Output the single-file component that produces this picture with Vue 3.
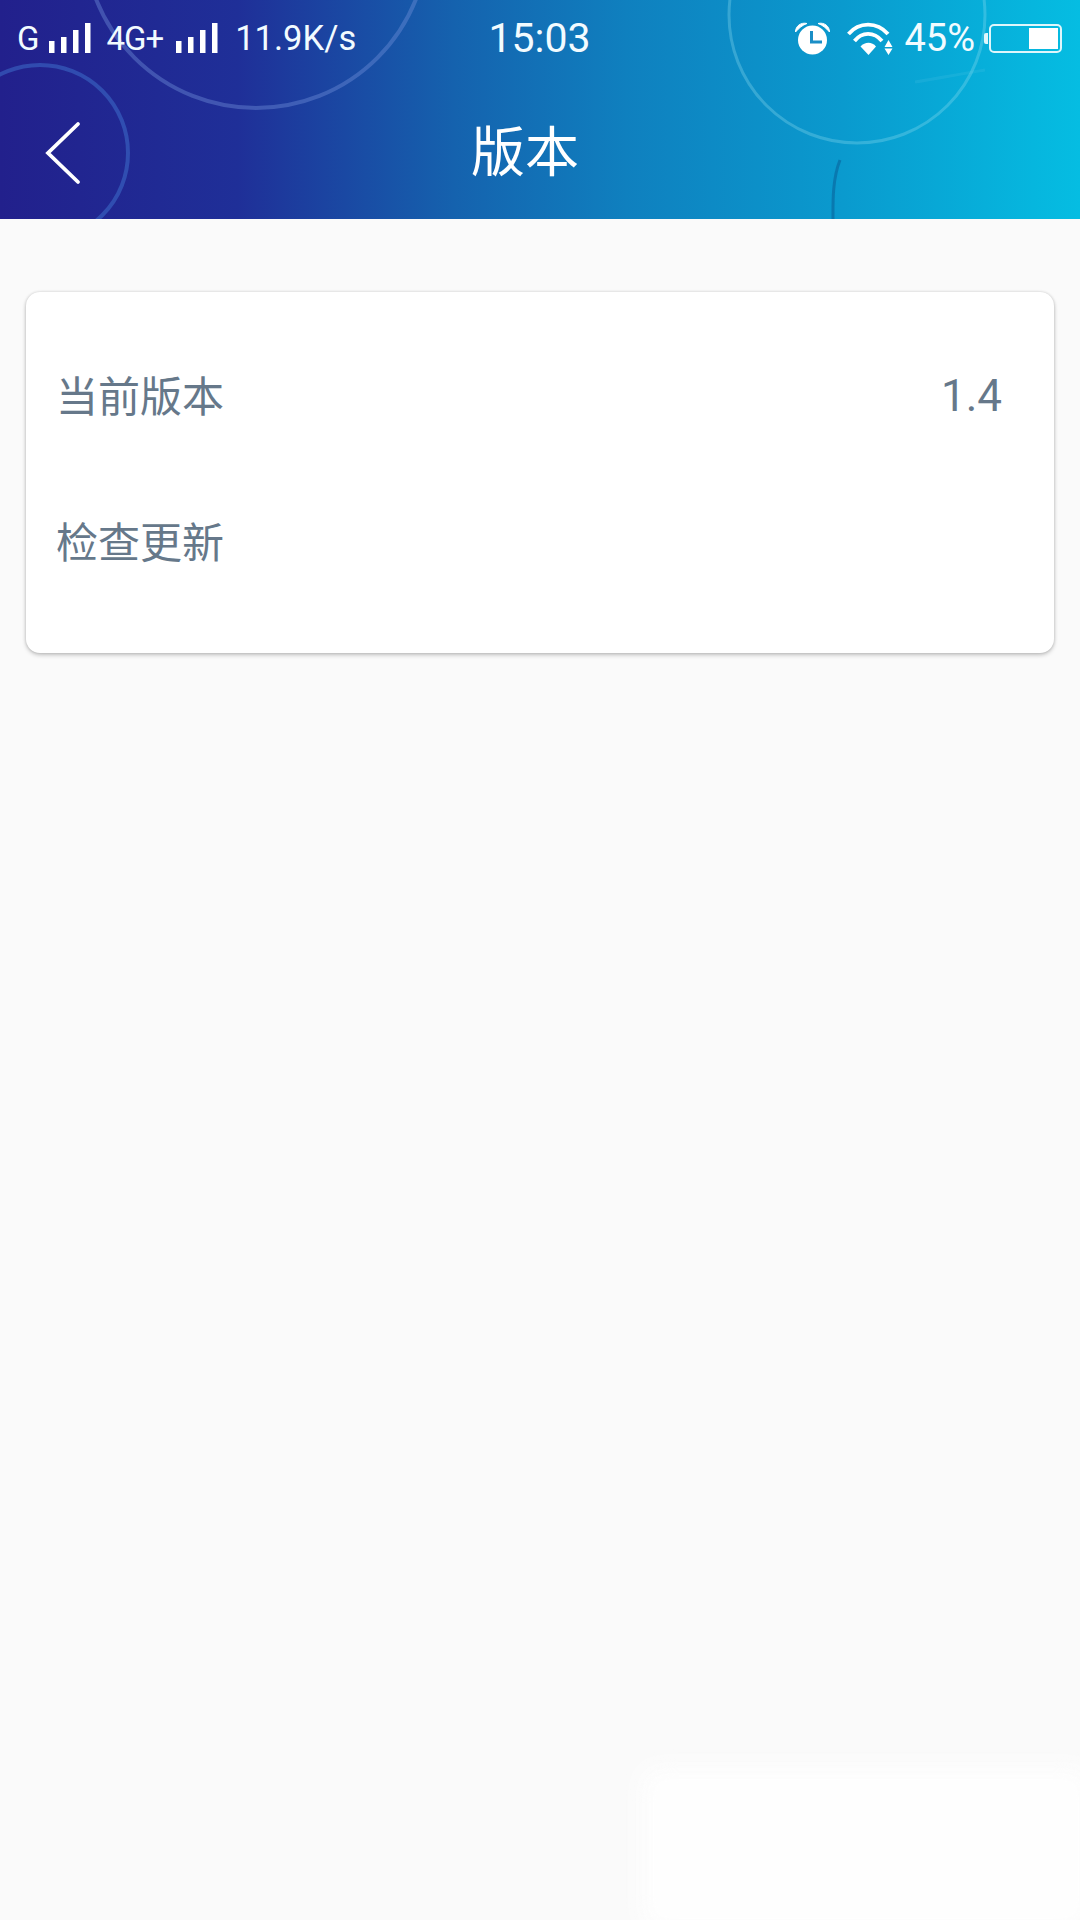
<script setup>
const rows = [
  { label: '当前版本', value: '1.4' },
  { label: '检查更新', value: '' }
]
const signalBars = [
  { x: 0, h: 12 },
  { x: 12, h: 16 },
  { x: 24, h: 23 },
  { x: 36, h: 30 }
]
</script>

<template>
  <div class="page">
    <header class="header">
      <svg class="decor" viewBox="0 0 1080 219" width="1080" height="219" fill="none">
        <circle cx="256" cy="-64" r="172" stroke="#6f8fd8" stroke-opacity="0.42" stroke-width="4" />
        <circle cx="40" cy="153" r="88" stroke="#3f74d0" stroke-opacity="0.5" stroke-width="4" />
        <circle cx="857" cy="15" r="128" stroke="#8fdcf0" stroke-opacity="0.32" stroke-width="3" />
        <path d="M840 160 C 832 180 833 205 833 219" stroke="#0a5f98" stroke-opacity="0.55" stroke-width="3" />
        <path d="M915 82 C 940 78 960 74 985 70" stroke="#7fd8ee" stroke-opacity="0.12" stroke-width="3" />
      </svg>

      <div class="status">
        <div class="status-left">
          <span class="net">G</span>
          <svg class="signal" width="42" height="30" viewBox="0 0 42 30">
            <rect v-for="b in signalBars" :key="b.x" :x="b.x" :y="30 - b.h" width="5.5" :height="b.h" fill="#fff" />
          </svg>
          <span class="net net-4g">4G+</span>
          <svg class="signal signal-2" width="42" height="30" viewBox="0 0 42 30">
            <rect v-for="b in signalBars" :key="b.x" :x="b.x" :y="30 - b.h" width="5.5" :height="b.h" fill="#fff" />
          </svg>
          <span class="speed">11.9K/s</span>
        </div>
        <div class="time">15:03</div>
        <div class="status-right">
          <svg class="alarm" width="35" height="33" viewBox="0 0 35 33">
            <circle cx="17.5" cy="18" r="14.5" fill="#fff" />
            <path d="M0.5 10 C0.5 4 6 0 12 1.5 C7.5 3 4 6 0.5 10 Z M34.5 10 C34.5 4 29 0 23 1.5 C27.5 3 31 6 34.5 10 Z" fill="#fff" stroke="#fff" stroke-width="1" />
            <path d="M16.5 9 V20 H27" stroke="#1a8ec6" stroke-width="3" fill="none" />
          </svg>
          <svg class="wifi" width="47" height="33" viewBox="0 0 47 33" fill="none">
            <path d="M1.5 12 C12 -0.5 30 -0.5 41 12" stroke="#fff" stroke-width="3.8" />
            <path d="M7.5 19 C15 9.5 27 9.5 35 19" stroke="#fff" stroke-width="3.8" />
            <path d="M13.5 24.5 C18 19.5 25 19.5 29 24.5 L21.5 33 Z" fill="#fff" />
            <path d="M41.5 18 L45.5 25 H37.5 Z M37.5 26.5 H45.5 L41.5 33 Z" fill="#fff" />
          </svg>
          <span class="percent">45%</span>
          <div class="battery">
            <span class="battery-fill"></span>
          </div>
        </div>
      </div>

      <nav class="nav">
        <svg class="back" width="38" height="64" viewBox="0 0 38 64" fill="none">
          <path d="M34 3 L4 32 L34 61" stroke="#fff" stroke-width="3.8" stroke-linecap="round" />
        </svg>
        <h1 class="title">版本</h1>
      </nav>
    </header>

    <main class="content">
      <section class="card">
        <div v-for="row in rows" :key="row.label" class="row">
          <span class="label">{{ row.label }}</span>
          <span class="value">{{ row.value }}</span>
        </div>
      </section>
    </main>

    <div class="patch"></div>
  </div>
</template>

<style>
html,
body {
  margin: 0;
  background: #fafafa;
}
</style>

<style scoped>
.page {
  position: relative;
  width: 1080px;
  height: 1920px;
  overflow: hidden;
  display: flex;
  flex-direction: column;
  background: #fafafa;
  font-family: "Noto Sans CJK SC", "Noto Sans", sans-serif;
}
.header {
  position: relative;
  height: 219px;
  flex: none;
  box-sizing: border-box;
  background: linear-gradient(90deg, #22208c 0%, #1f2f98 22%, #1562ae 42%, #0f80bf 58%, #0a9ace 78%, #05bde2 100%);
  color: #fff;
}
.decor {
  position: absolute;
  inset: 0;
}
.status {
  position: relative;
  height: 76px;
  padding: 0 18px 0 17px;
  display: grid;
  grid-template-columns: 1fr auto 1fr;
  align-items: center;
  font-family: Roboto, "Liberation Sans", sans-serif;
  color: #f2fbff;
}
.status-left {
  display: flex;
  align-items: center;
}
.net {
  font-size: 33px;
  line-height: 1;
}
.net-4g {
  margin-left: 15px;
  letter-spacing: -1px;
}
.signal {
  margin-left: 10px;
}
.signal-2 {
  margin-left: 13px;
}
.speed {
  margin-left: 17px;
  font-size: 34.5px;
  line-height: 1;
}
.time {
  font-size: 41px;
  line-height: 1;
}
.status-right {
  display: flex;
  align-items: center;
  justify-content: flex-end;
}
.wifi {
  margin-left: 17px;
}
.percent {
  margin-left: 10px;
  font-size: 38px;
  line-height: 1;
}
.battery {
  position: relative;
  margin-left: 14px;
  width: 73px;
  height: 29px;
  box-sizing: border-box;
  border: 2px solid #dff6fb;
  border-radius: 5px;
  padding: 2px;
  display: flex;
  justify-content: flex-end;
}
.battery::before {
  content: "";
  position: absolute;
  left: -7px;
  top: 7px;
  width: 4px;
  height: 11px;
  border-radius: 2px 0 0 2px;
  background: #dff6fb;
}
.battery-fill {
  width: 29px;
  background: #fff;
}
.nav {
  position: relative;
  height: 143px;
  padding: 11px 0 0 44px;
  box-sizing: border-box;
  display: flex;
  align-items: center;
}
.title {
  margin: 0 0 9px 389px;
  font-size: 54px;
  font-weight: 400;
  line-height: 1;
}
.content {
  flex: 1;
  padding: 73px 26px 0;
}
.card {
  height: 361px;
  box-sizing: border-box;
  padding: 31px 52px 38px 32px;
  background: #fff;
  border-radius: 14px;
  box-shadow: 0 2px 4px rgba(0, 0, 0, 0.22), 0 0 3px rgba(0, 0, 0, 0.14);
  display: flex;
  flex-direction: column;
}
.row {
  flex: 1;
  display: flex;
  align-items: center;
  justify-content: space-between;
  color: #66788a;
}
.label {
  margin-left: -2px;
  padding-bottom: 5px;
  font-size: 42px;
  font-weight: 400;
  line-height: 1;
}
.value {
  font-family: Roboto, "Liberation Sans", sans-serif;
  font-size: 44px;
  line-height: 1;
}
.patch {
  position: absolute;
  left: 652px;
  top: 1778px;
  width: 428px;
  height: 142px;
  background: #fefefe;
  box-shadow: 0 0 24px 10px #fefefe;
  filter: blur(8px);
}
</style>
